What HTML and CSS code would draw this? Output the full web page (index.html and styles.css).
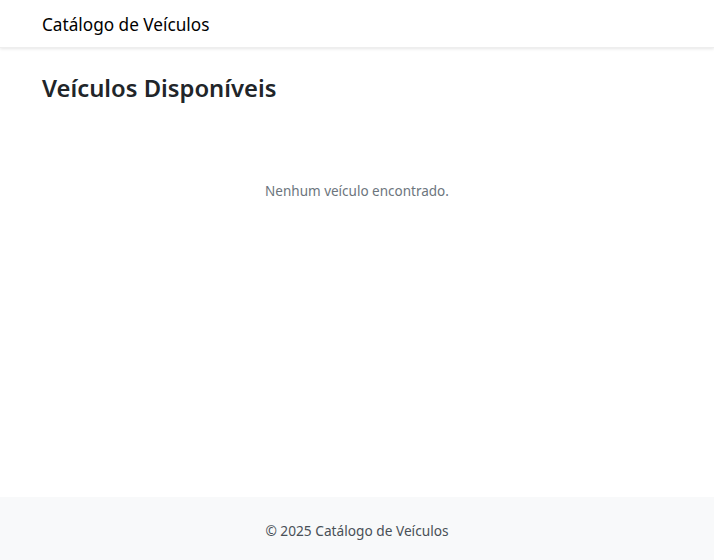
FILE: index.html
```html
<!DOCTYPE html>
<html lang="pt-BR">
<head>
<meta charset="utf-8">
<title>Catálogo de Veículos</title>
<link rel="stylesheet" href="styles.css">
</head>
<body>
<div class="page">
  <nav class="navbar">
    <div class="container">
      <a class="brand" href="#">Catálogo de Veículos</a>
    </div>
  </nav>
  <main class="main">
    <div class="container">
      <h1 class="title">Veículos Disponíveis</h1>
      <p class="empty">Nenhum veículo encontrado.</p>
    </div>
  </main>
  <footer class="footer">
    <span>© 2025 Catálogo de Veículos</span>
  </footer>
</div>
</body>
</html>
```
FILE: styles.css
```css
* { box-sizing: border-box; }
html, body { margin: 0; padding: 0; }
body {
  font-family: "Noto Sans", "Open Sans", sans-serif;
  color: #212529;
  background: #fff;
}
.page {
  min-height: 560px;
  display: flex;
  flex-direction: column;
}
.container {
  padding: 0 42px;
}
.navbar {
  height: 48px;
  display: flex;
  align-items: center;
  background: #fff;
  box-shadow: 0 1px 3px rgba(0,0,0,0.1);
  border-bottom: 1px solid #eee;
}
.brand {
  font-size: 17.2px;
  color: #000;
  text-decoration: none;
  position: relative;
  top: 1px;
}
.main { flex: 1; }
.title {
  margin: 24px 0 0;
  font-size: 23.8px;
  font-weight: 600;
  line-height: 32px;
}
.empty {
  margin: 78px 0 0;
  text-align: center;
  color: #6c757d;
  font-size: 13.5px;
}
.footer {
  height: 63px;
  padding-top: 3px;
  background: #f8f9fa;
  display: flex;
  align-items: center;
  justify-content: center;
  color: #495057;
  font-size: 13.7px;
}
```
